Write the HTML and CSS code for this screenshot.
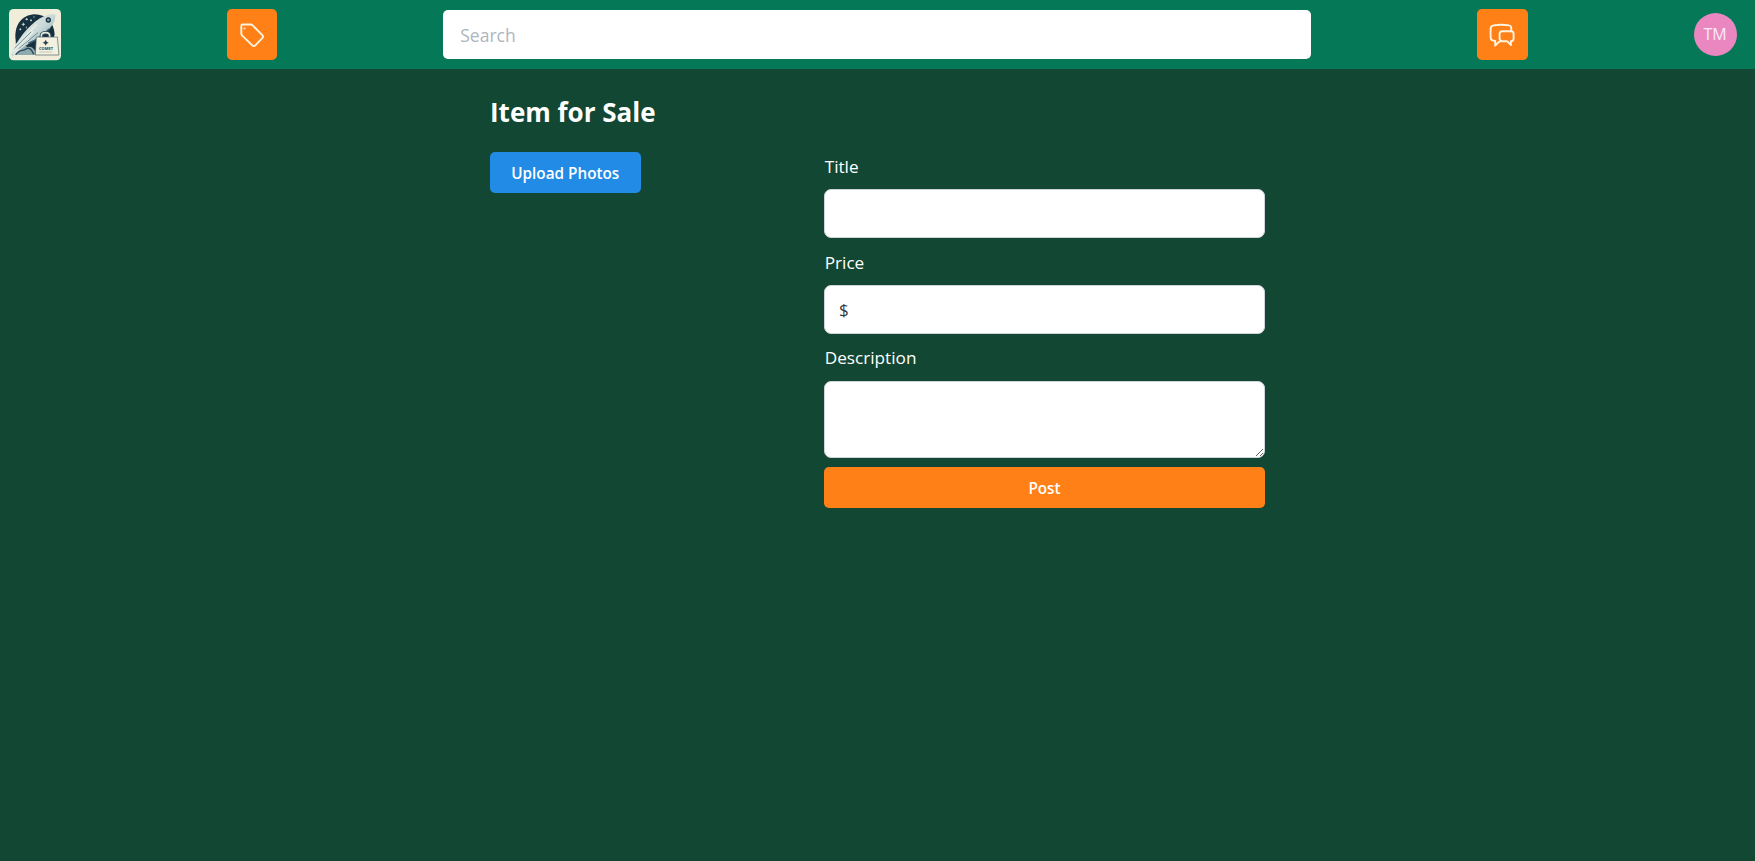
FILE: index.html
```html
<!DOCTYPE html>
<html lang="en">
<head>
<meta charset="utf-8">
<title>Item for Sale</title>
<link rel="stylesheet" href="styles.css">
</head>
<body>
<header class="bar">
  <a class="logo" aria-label="Comet">
    <svg viewBox="0 0 156 156" width="52" height="52">
      <defs>
        <linearGradient id="body" x1="0" y1="0" x2="1" y2="1">
          <stop offset="0" stop-color="#f4f5ec"/><stop offset=".5" stop-color="#c9d8d8"/><stop offset="1" stop-color="#5b838e"/>
        </linearGradient>
        <clipPath id="edge"><rect width="156" height="154" rx="14"/></clipPath>
      </defs>
      <g clip-path="url(#edge)">
        <rect width="156" height="156" fill="#f0eedb"/>
        <path d="M20 94C15 48 38 18 77 16c35 0 58 25 60 60l-6 20-51 42H22z" fill="#17303f"/>
        <path d="M14 138c3-12 8-18 16-20 5-14 16-13 24-4 12-3 20 3 25 13v11z" fill="#8eaaae"/>
        <path d="M6 137C24 92 58 50 93 28c18-11 34-14 46-12 2 17-7 32-20 46C98 86 62 100 34 121c-11 8-18 14-23 23z" fill="url(#body)"/>
        <path d="M11 119 84 46M10 131 74 67M14 137 61 90" stroke="#e6ece6" stroke-width="5"/>
        <path d="M17 117 66 69M29 119 87 71" stroke="#54808c" stroke-width="2.500"/>
        <path d="M58 103c24-10 46-24 62-43" fill="none" stroke="#3c6472" stroke-width="5"/>
        <circle cx="118" cy="33" r="6" fill="#809fa7" stroke="#17303f" stroke-width="4"/>
        <path d="M43 41v10M38 46h10M53 27v7M49 31h8M66 31v6M63 34h6M34 58v6M31 61h6M75 22v4M52 53v5" stroke="#d5e5df" stroke-width="2.5"/>
        <path d="M20 137c15-20 21-8 31-17 8-6 17 0 23 16" fill="none" stroke="#284957" stroke-width="4"/>
        <path d="M97 88V80c0-12 25-12 25 0v8" fill="none" stroke="#28434d" stroke-width="10"/>
        <path d="M97 88V80c0-12 25-12 25 0v8" fill="none" stroke="#e4e8dc" stroke-width="5"/>
        <path d="M82 84h63l5 54H79z" fill="#f2f0df" stroke="#4a626a" stroke-width="2"/>
        <path d="m110 92 3 6 6 3-6 3-3 6-3-6-6-3 6-3z" fill="#28434d"/>
        <path d="M92 129h38" stroke="#aab5ae" stroke-width="2"/>
        <text class="logo-word" x="111" y="123" text-anchor="middle">COMET</text>
      </g>
    </svg>
  </a>
  <button class="icon-btn" aria-label="Sell">
    <svg viewBox="0 0 50 50" width="50" height="50">
      <path d="M14.300 15.800c0-.8.5-1.300 1.300-1.300h8.100c.8 0 1.400.3 2 .9l9.600 9.800c1 1 1 2 0 3l-7 7.200c-1 1-2 1-3 0L15.200 25.600c-.6-.6-.9-1.200-.9-2z"/>
      <circle class="hole" cx="17.500" cy="18.500" r="1"/>
    </svg>
  </button>
  <input class="search" placeholder="Search">
  <button class="icon-btn" aria-label="Messages">
    <svg viewBox="0 0 50 50" width="50" height="50">
      <path d="M34.300 21v-2.800c0-1.500-.8-2.600-2.300-2.800-5-.8-10.500-.8-15.500 0-1.500.2-2.700 1.400-2.800 2.900-.2 3.500-.2 6.500 0 9.600.1 1.500 1.200 2.500 2.700 2.700l1.800.3v4.700l3.900-4h1.200"/>
      <path d="M25.100 21.300h8.800c1.600 0 2.700 1.100 2.700 2.700v4.500c0 1.600-1.100 2.700-2.700 2.700v3.800L30.300 31.300h-1.600l-3.400 0c-1.600 0-2.700-1.100-2.700-2.700V24c0-1.600.9-2.700 2.500-2.700z"/>
    </svg>
  </button>
  <div class="avatar">TM</div>
</header>
<main class="page">
  <h1>Item for Sale</h1>
  <div class="columns">
    <div class="photos"><button class="btn upload">Upload Photos</button></div>
    <form class="form">
      <label for="title">Title</label>
      <input class="field" id="title">
      <label for="price">Price</label>
      <input class="field" id="price" value="$">
      <label for="desc">Description</label>
      <textarea class="field area" id="desc"></textarea>
      <button class="btn post" type="button">Post</button>
    </form>
  </div>
</main>
</body>
</html>
```
FILE: styles.css
```css
* { box-sizing: border-box; }
body {
  margin: 0;
  min-height: 861px;
  background: #124734;
  color: #fff;
  font-family: "Open Sans", "Noto Sans", sans-serif;
}
button, input, textarea { font-family: inherit; }
.bar {
  height: 69px;
  padding: 0 18.500px 0 9px;
  background: #057857;
  display: flex;
  align-items: center;
  justify-content: space-between;
}
.logo, .logo svg { display: block; }
.logo-word { font: bold 12px "Open Sans", sans-serif; fill: #28434d; }
.icon-btn {
  width: 50.500px;
  height: 50.500px;
  padding: 0;
  border: 0;
  border-radius: 5px;
  background: #ff8017;
  display: grid;
  place-items: center;
}
.icon-btn path {
  fill: none;
  stroke: #fff3df;
  stroke-width: 1.9;
  stroke-linecap: round;
  stroke-linejoin: round;
}
.hole { fill: #ffe6c8; }
.search {
  width: 868px;
  height: 49px;
  padding: 1px 17px 0;
  border: 0;
  border-radius: 5px;
  background: #fff;
  font-size: 17.5px;
}
.search::placeholder { color: #adb5bd; opacity: 1; }
.avatar {
  width: 43px;
  height: 43px;
  padding-bottom: 1px;
  border-radius: 50%;
  background: #ea87c1;
  color: #fdeaf5;
  font-size: 16px;
  display: grid;
  place-items: center;
}
.page { width: 775px; margin: 0 auto; padding-top: 22px; }
h1 {
  margin: 0;
  height: 40px;
  font-size: 26px;
  line-height: 42px;
  font-weight: 700;
  white-space: nowrap;
}
.columns {
  margin-top: 21px;
  display: grid;
  grid-template-columns: 334px 441px;
}
.btn {
  height: 41.300px;
  padding: 1px 0 0;
  border: 0;
  border-radius: 5px;
  color: #fff;
  font-size: 15.3px;
  font-weight: 600;
}
.upload { width: 150.500px; background: #228be6; }
.form { display: flex; flex-direction: column; }
.form label { height: 37.200px; line-height: 30.500px; font-size: 17.2px; padding-left: 0.7px; }
.field {
  width: 100%;
  height: 48.800px;
  margin: 0 0 9.700px;
  padding: 1px 15px 0 14px;
  border: 1px solid #ced4da;
  border-radius: 7px;
  background: #fff;
  color: #35383b;
  font-size: 17px;
}
.area { height: 77px; margin-bottom: 9.500px; resize: vertical; }
.post { width: 100%; background: #ff8017; }
```
